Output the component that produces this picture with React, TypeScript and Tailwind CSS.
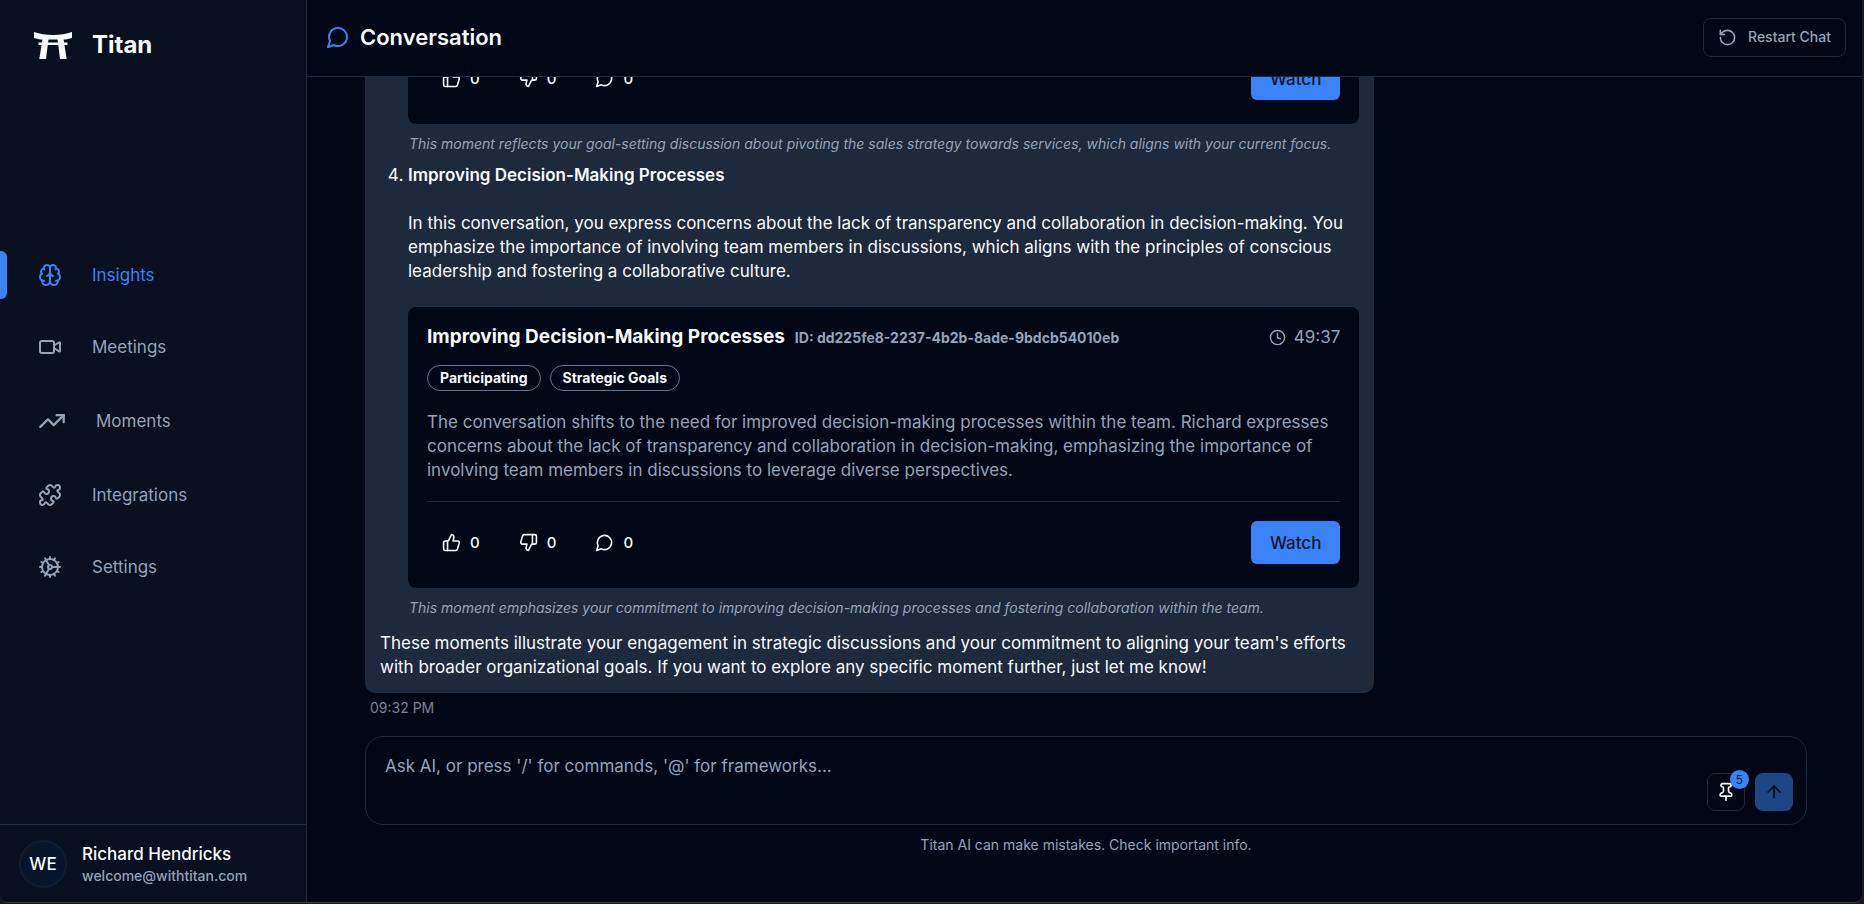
import { ReactNode } from "react";
import { Clock, Cog, Pin, Puzzle, RotateCcw, ThumbsDown, ThumbsUp, ArrowUp, TrendingUp, Video } from "lucide-react";

function BrainIcon() {
  return (
    <svg width="24" height="24" viewBox="0 0 24 24" fill="none" stroke="currentColor" strokeWidth="2" strokeLinecap="round" strokeLinejoin="round" aria-hidden="true">
      <path d="M12 5a3 3 0 1 0-5.997.125 4 4 0 0 0-2.526 5.77 4 4 0 0 0 .556 6.588A4 4 0 1 0 12 18Z" />
      <path d="M12 5a3 3 0 1 1 5.997.125 4 4 0 0 1 2.526 5.77 4 4 0 0 1-.556 6.588A4 4 0 1 1 12 18Z" />
      <path d="M15 13a4.5 4.5 0 0 1-3-4 4.5 4.5 0 0 1-3 4" />
      <path d="M17.599 6.5a3 3 0 0 0 .399-1.375" />
      <path d="M6.003 5.125A3 3 0 0 0 6.401 6.5" />
      <path d="M3.477 10.896a4 4 0 0 1 .585-.396" />
      <path d="M19.938 10.5a4 4 0 0 1 .585.396" />
      <path d="M6 18a4 4 0 0 1-1.967-.516" />
      <path d="M19.967 17.484A4 4 0 0 1 18 18" />
    </svg>
  );
}

function ChatIcon({ size, strokeWidth = 2, className }: { size: number; strokeWidth?: number; className?: string }) {
  return (
    <svg width={size} height={size} viewBox="0 0 24 24" fill="none" stroke="currentColor" strokeWidth={strokeWidth} strokeLinecap="round" strokeLinejoin="round" className={className} aria-hidden="true">
      <path d="M7.9 20A9 9 0 1 0 4 16.1L2 22Z" />
    </svg>
  );
}

function TitanLogo() {
  return (
    <svg width="38" height="27" viewBox="0 0 38 27" fill="currentColor" aria-hidden="true">
      <path d="M0 0C6 2 12 3 19 3S32 2 38 0V6C36 6.6 34 7.2 32 7.5H6C4 7.2 2 6.6 0 6Z" />
      <path d="M8.5 7H14.5L12 27H5.3Z" />
      <path d="M29.5 7H23.5L26 27H32.7Z" />
      <path d="M4.5 10.5H33.5V13H4.5Z" />
    </svg>
  );
}

const navItems: { label: string; icon: ReactNode; active?: boolean }[] = [
  { label: "Insights", icon: <BrainIcon />, active: true },
  { label: "Meetings", icon: <Video size={24} /> },
  { label: "Moments", icon: <TrendingUp size={28} /> },
  { label: "Integrations", icon: <Puzzle size={24} /> },
  { label: "Settings", icon: <Cog size={24} /> },
];

function Sidebar() {
  return (
    <aside className="flex w-[307px] shrink-0 flex-col border-r border-[#1e293b] bg-[#080f1e]">
      <div className="flex items-center gap-5 px-[34px] pt-7 text-slate-50">
        <TitanLogo />
        <span className="text-2xl leading-[34px] font-bold">Titan</span>
      </div>
      <nav className="mt-[177px] flex flex-col" aria-label="Main">
        {navItems.map((item) => (
          <a
            key={item.label}
            href="#"
            aria-current={item.active ? "page" : undefined}
            className={
              item.active
                ? "relative flex items-center gap-[30px] py-6 pl-[38px] text-[#3b82f6] before:absolute before:left-0 before:h-12 before:w-[7px] before:rounded-r-md before:bg-[#3b82f6]"
                : "flex items-center gap-[30px] py-6 pl-[38px] text-[#94a3b8]"
            }
          >
            {item.icon}
            <span>{item.label}</span>
          </a>
        ))}
      </nav>
      <div className="mt-auto flex items-center gap-[15px] border-t border-[#1e293b] px-[19px] pt-[15px] pb-[14px]">
        <div className="flex size-12 items-center justify-center rounded-full border-2 border-[#111b2d] bg-[#061329] font-medium text-slate-50">WE</div>
        <div className="flex flex-col">
          <span className="font-medium text-slate-50">Richard Hendricks</span>
          <span className="text-sm font-medium text-[#94a3b8]">welcome@withtitan.com</span>
        </div>
      </div>
    </aside>
  );
}

function MomentFooter() {
  return (
    <div className="flex items-center justify-between border-t border-[#1e293b] pt-[19px] pb-6">
      <div className="flex items-center gap-[39px] pl-[15px] text-[15px] text-slate-50">
        <button type="button" aria-label="Like" className="flex items-center gap-[9px] font-medium">
          <ThumbsUp size={19} strokeWidth={2} />0
        </button>
        <button type="button" aria-label="Dislike" className="flex items-center gap-[9px] font-medium">
          <ThumbsDown size={19} strokeWidth={2} />0
        </button>
        <button type="button" aria-label="Comment" className="flex items-center gap-[9px] font-medium">
          <ChatIcon size={19} strokeWidth={2} />0
        </button>
      </div>
      <button type="button" className="h-[43px] rounded-md bg-[#3b82f6] px-[19px] font-medium text-[#0f172a]">Watch</button>
    </div>
  );
}

function Note({ children }: { children: ReactNode }) {
  return <p className="pt-[10px] pl-px text-sm leading-5 text-[#94a3b8] italic">{children}</p>;
}

function Transcript() {
  return (
    <section className="flex min-h-0 flex-1 flex-col justify-end overflow-hidden" aria-label="Messages">
      <div className="w-[70%] shrink-0 rounded-[10px] bg-[#1e293b] px-[15px] pb-[14px] text-slate-50">
        <div className="pl-7">
          <div className="rounded-lg bg-[#020715] px-[19px]">
            <MomentFooter />
          </div>
          <Note>This moment reflects your goal-setting discussion about pivoting the sales strategy towards services, which aligns with your current focus.</Note>
        </div>
        <ol start={4} className="mt-[9px] list-decimal pl-7">
          <li>
            <strong className="font-semibold">Improving Decision-Making Processes</strong>
            <p className="my-6">
              In this conversation, you express concerns about the lack of transparency and collaboration in decision-making. You emphasize the importance of involving team members in discussions, which aligns with the principles of conscious leadership and fostering a collaborative culture.
            </p>
            <article className="rounded-lg bg-[#020715] px-[19px] pt-4">
              <div className="flex items-center justify-between">
                <h2 className="flex items-baseline gap-[10px] text-[19px] leading-7 font-bold">
                  Improving Decision-Making Processes
                  <span className="text-sm font-bold text-[#94a3b8]">ID: dd225fe8-2237-4b2b-8ade-9bdcb54010eb</span>
                </h2>
                <span className="flex items-center gap-2 text-[#94a3b8]">
                  <Clock size={17} />
                  49:37
                </span>
              </div>
              <div className="mt-[14px] flex gap-[9px]">
                <span className="rounded-full border border-slate-500 px-3 text-sm leading-6 font-bold">Participating</span>
                <span className="rounded-full border border-slate-500 px-3 text-sm leading-6 font-bold">Strategic Goals</span>
              </div>
              <p className="my-[19px] text-[#94a3b8]">
                The conversation shifts to the need for improved decision-making processes within the team. Richard expresses concerns about the lack of transparency and collaboration in decision-making, emphasizing the importance of involving team members in discussions to leverage diverse perspectives.
              </p>
              <MomentFooter />
            </article>
            <Note>This moment emphasizes your commitment to improving decision-making processes and fostering collaboration within the team.</Note>
          </li>
        </ol>
        <p className="mt-[13px]">
          These moments illustrate your engagement in strategic discussions and your commitment to aligning your team's efforts with broader organizational goals. If you want to explore any specific moment further, just let me know!
        </p>
      </div>
      <time className="pt-[5px] pl-[5px] text-sm text-[#7b8190]">09:32 PM</time>
    </section>
  );
}

function Composer() {
  return (
    <form className="mt-[18px] flex h-[89px] shrink-0 items-end gap-[10px] rounded-[18px] border border-[#1e293b] pr-[13px] pb-[13px]">
      <textarea
        aria-label="Message"
        placeholder="Ask AI, or press '/' for commands, '@' for frameworks..."
        className="h-[74px] flex-1 resize-none self-start bg-transparent pt-[17px] pl-[19px] leading-6 text-slate-50 outline-none placeholder:text-[#94a3b8]"
      />
      <button type="button" aria-label="Pinned items, 5" className="relative flex size-[38px] items-center justify-center rounded-lg border border-[#1e293b] text-slate-50">
        <Pin size={20} />
        <span className="absolute -top-1 -right-[5px] flex size-[19px] items-center justify-center rounded-full bg-[#3b82f6] text-xs text-[#0f172a]">5</span>
      </button>
      <button type="submit" aria-label="Send" className="flex size-[38px] items-center justify-center rounded-lg bg-[#1d4685] text-[#020715]">
        <ArrowUp size={20} strokeWidth={2} />
      </button>
    </form>
  );
}

export default function App() {
  return (
    <div className="h-screen bg-[#1a1a1a] pr-[2px] pb-px font-['Inter',sans-serif] text-[17px] leading-6">
      <div className="flex h-full overflow-hidden rounded-b-lg border-b border-[#3a3a3a] bg-[#020715]">
        <Sidebar />
        <main className="flex min-w-0 flex-1 flex-col">
          <header className="flex h-[77px] shrink-0 items-center justify-between border-b border-[#1e293b] pr-4 pb-[2px] pl-[19px]">
            <h1 className="flex items-center gap-[10px] text-[22px] font-semibold text-slate-50">
              <ChatIcon size={24} className="text-[#3b82f6]" />
              Conversation
            </h1>
            <button type="button" className="flex h-[39px] items-center gap-[11px] rounded-lg border border-[#1e293b] px-[14px] text-sm font-medium text-[#94a3b8]">
              <RotateCcw size={19} />
              Restart Chat
            </button>
          </header>
          <div className="flex min-h-0 flex-1 flex-col pr-[55px] pl-[58px]">
            <Transcript />
            <Composer />
            <p className="pt-[10px] pb-[47px] text-center text-sm text-[#94a3b8]">Titan AI can make mistakes. Check important info.</p>
          </div>
        </main>
      </div>
    </div>
  );
}
